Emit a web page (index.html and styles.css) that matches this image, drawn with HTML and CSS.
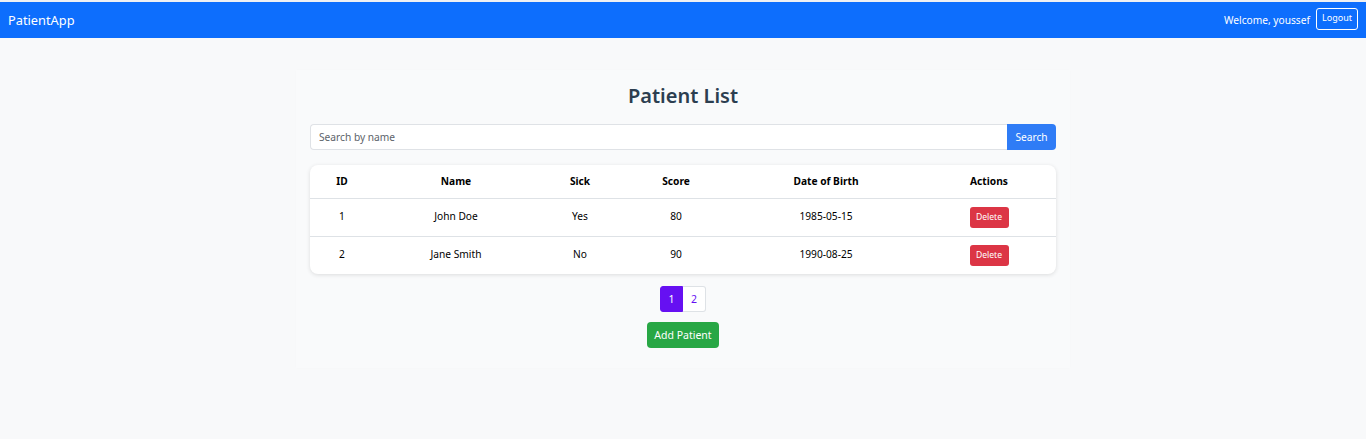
FILE: index.html
```html
<!DOCTYPE html>
<html>
<head>
<meta charset="utf-8">
<title>PatientApp</title>
<link rel="stylesheet" href="styles.css">
</head>
<body>
<nav class="navbar">
  <span class="brand">PatientApp</span>
  <div class="nav-right">
    <span class="welcome">Welcome, youssef</span>
    <button class="logout">Logout</button>
  </div>
</nav>
<main class="container">
  <h1 class="title">Patient List</h1>
  <div class="search">
    <input class="search-input" type="text" placeholder="Search by name">
    <button class="search-btn">Search</button>
  </div>
  <div class="card">
    <table class="table">
      <thead>
        <tr>
          <th class="c-id">ID</th>
          <th class="c-name">Name</th>
          <th class="c-sick">Sick</th>
          <th class="c-score">Score</th>
          <th class="c-dob">Date of Birth</th>
          <th class="c-act">Actions</th>
        </tr>
      </thead>
      <tbody>
        <tr>
          <td>1</td><td>John Doe</td><td>Yes</td><td>80</td><td>1985-05-15</td>
          <td><button class="del">Delete</button></td>
        </tr>
        <tr>
          <td>2</td><td>Jane Smith</td><td>No</td><td>90</td><td>1990-08-25</td>
          <td><button class="del">Delete</button></td>
        </tr>
      </tbody>
    </table>
  </div>
  <div class="pager">
    <span class="page active">1</span><span class="page">2</span>
  </div>
  <div class="add-wrap">
    <button class="add">Add Patient</button>
  </div>
</main>
</body>
</html>
```
FILE: styles.css
```css
* { box-sizing: border-box; }
html, body { margin: 0; padding: 0; }
body {
  background: #f8f9fa;
  font-family: "Noto Sans", "Open Sans", sans-serif;
  color: #212529;
  border-top: 2px solid #eef0f3;
  min-height: 439px;
}
.navbar {
  height: 36px;
  background: #0d6efd;
  display: flex;
  align-items: center;
  justify-content: space-between;
  padding: 0 8px;
  color: #fff;
}
.brand { font-size: 12.8px; }
.nav-right { display: flex; align-items: center; gap: 6px; }
.welcome { font-size: 10.2px; }
.logout {
  background: transparent;
  color: #fff;
  border: 1px solid #fff;
  border-radius: 3px;
  font-family: inherit;
  font-size: 9px;
  height: 22px;
  width: 42px;
  padding: 0 0 2px;
  margin-top: -3px;
}
.container {
  width: 774px;
  margin: 32px auto 0;
  padding: 12px 14px 20px;
  background: #f9fafb;
  box-shadow: 0 0 4px rgba(0,0,0,0.015);
}
.title {
  margin: 0;
  text-align: center;
  font-size: 20px;
  font-weight: 600;
  color: #2c3e50;
  line-height: 28px;
}
.search {
  display: flex;
  margin-top: 14px;
  height: 26px;
}
.search-input {
  flex: 1;
  border: 1px solid #dfe2e6;
  border-right: none;
  border-radius: 4px 0 0 4px;
  padding: 0 8px;
  font-family: inherit;
  font-size: 10.2px;
  background: #fff;
  outline: none;
}
.search-input::placeholder { color: #5c636a; }
.search-btn {
  width: 49px;
  background: #2f7cf6;
  color: #fff;
  border: none;
  border-radius: 0 4px 4px 0;
  font-family: inherit;
  font-size: 10.2px;
  padding: 0 0 1px;
}
.card {
  margin-top: 15px;
  background: #fff;
  border-radius: 8px;
  box-shadow: 0 1px 4px rgba(0,0,0,0.12);
  overflow: hidden;
}
.table {
  width: 100%;
  border-collapse: collapse;
  table-layout: fixed;
  font-size: 10.2px;
}
.table th {
  height: 33px;
  font-weight: 700;
  color: #000;
  border-bottom: 1px solid #dee2e6;
  text-align: center;
  padding: 0 0 1px;
}
.table td {
  height: 38px;
  text-align: center;
  color: #000;
  padding: 0 0 3px;
}
.table td:last-child { padding: 0; }
.table tbody tr + tr td { border-top: 1px solid #dee2e6; }
.c-id { width: 64px; }
.c-name { width: 164px; }
.c-sick { width: 84px; }
.c-score { width: 108px; }
.c-dob { width: 192px; }
.c-act { width: 134px; }
.del {
  background: #dc3545;
  color: #fff;
  border: none;
  border-radius: 3px;
  font-family: inherit;
  font-size: 8.6px;
  height: 21px;
  width: 39px;
  padding: 0;
}
.pager {
  display: flex;
  justify-content: center;
  margin-top: 12px;
}
.page {
  width: 23px;
  height: 26px;
  display: flex;
  align-items: center;
  justify-content: center;
  font-size: 10.5px;
  color: #6610f2;
  background: #fff;
  border: 1px solid #dee2e6;
}
.page.active {
  background: #6610f2;
  color: #fff;
  border-color: #6610f2;
  border-radius: 3px 0 0 3px;
}
.page + .page { border-left: none; border-radius: 0 3px 3px 0; }
.add-wrap {
  display: flex;
  justify-content: center;
  margin-top: 10px;
}
.add {
  height: 26px;
  width: 72px;
  background: #28a745;
  color: #fff;
  border: none;
  border-radius: 4px;
  font-family: inherit;
  font-size: 10.5px;
  padding: 0;
}
```
